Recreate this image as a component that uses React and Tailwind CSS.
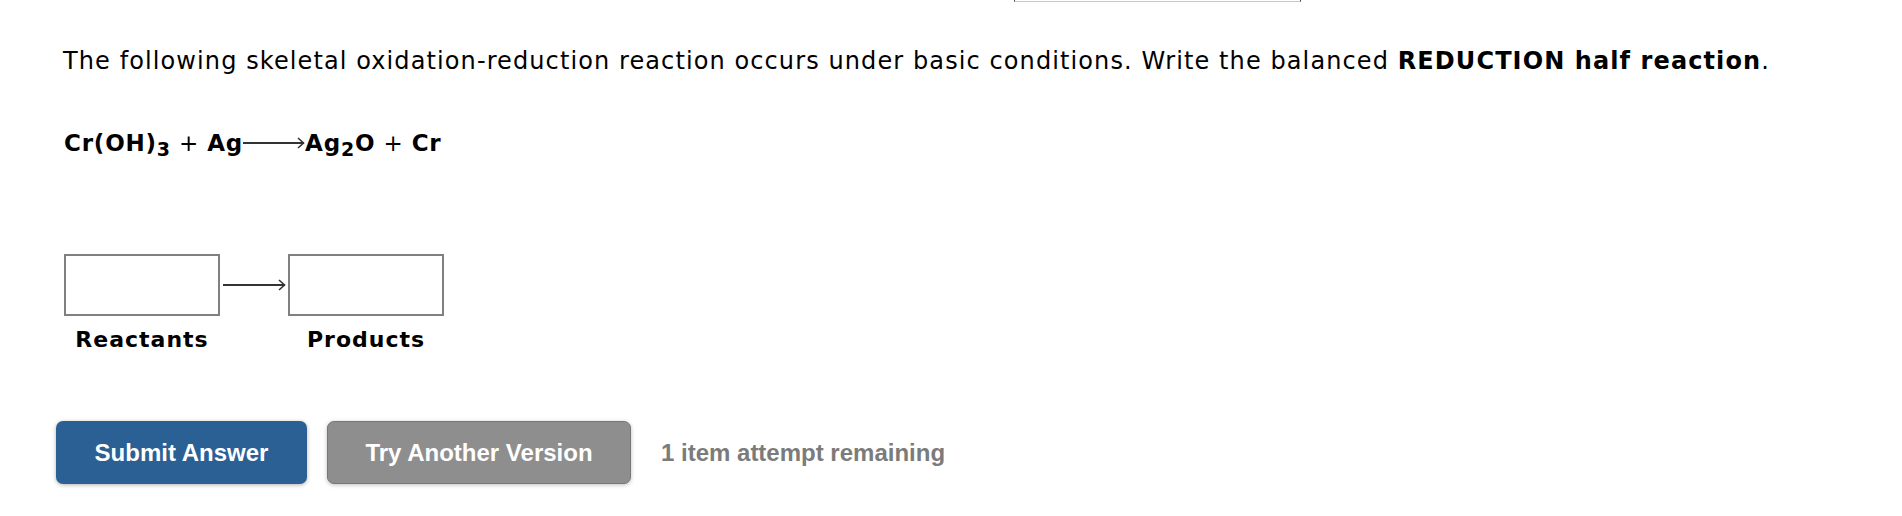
import React from "react";

const Arrow = ({ width }) => (
  <svg width={width} height="14" viewBox={`0 0 ${width} 14`} className="block">
    <line x1="0" y1="7" x2={width - 1} y2="7" stroke="#333" strokeWidth="2" />
    <polyline points={`${width - 7},2 ${width - 1.5},7 ${width - 7},12`} fill="none" stroke="#333" strokeWidth="1.6" />
  </svg>
);

const Sub = ({ children }) => (
  <span className="relative top-[6px] text-[19px] leading-none">{children}</span>
);

const App = () => {
  return (
    <div className="w-[1902px] h-[516px] bg-white overflow-hidden font-['DejaVu_Sans',Verdana,sans-serif] text-black">
      <div className="ml-[1014px] w-[287px] h-[2px] border-x border-b border-x-[#444] border-b-[#c8c8c8]" />

      <div className="pl-[56px]">
        <p className="ml-[7px] mt-[41px] text-[24px] leading-[36px] tracking-[1.1px]">
          The following skeletal oxidation-reduction reaction occurs under basic conditions. Write the balanced{" "}
          <b>REDUCTION half reaction</b>.
        </p>

        <div className="ml-[8px] mt-[48px] flex items-center text-[23px] tracking-[0.8px] font-bold h-[32px]">
          <span>Cr(OH)</span>
          <Sub>3</Sub>
          <span className="font-normal">&nbsp;+&nbsp;</span>
          <span>Ag</span>
          <Arrow width={62} />
          <span>Ag</span>
          <Sub>2</Sub>
          <span>O</span>
          <span className="font-normal">&nbsp;+&nbsp;</span>
          <span>Cr</span>
        </div>

        <div className="ml-[8px] mt-[95px] flex items-start">
          <div className="flex flex-col items-center">
            <div className="w-[156px] h-[62px] border-2 border-[#808080] bg-white" />
            <div className="mt-[7px] text-[22px] tracking-[1px] font-bold">Reactants</div>
          </div>
          <div className="ml-[3px] h-[62px] flex items-center">
            <Arrow width={63} />
          </div>
          <div className="ml-[2px] flex flex-col items-center">
            <div className="w-[156px] h-[62px] border-2 border-[#808080] bg-white" />
            <div className="mt-[7px] text-[22px] tracking-[1px] font-bold">Products</div>
          </div>
        </div>

        <div className="mt-[65px] flex items-center font-['Liberation_Sans',Arial,sans-serif] font-bold text-[24px]">
          <button className="w-[251px] h-[63px] rounded-[7px] bg-[#2a6093] text-white shadow-[0_1px_4px_rgba(0,0,0,0.3)]">
            Submit Answer
          </button>
          <button className="ml-[20px] w-[304px] h-[63px] rounded-[7px] bg-[#8e8e8e] border border-[#777] text-white shadow-[0_1px_4px_rgba(0,0,0,0.25)]">
            Try Another Version
          </button>
          <span className="ml-[30px] text-[#7b7b7b]">1 item attempt remaining</span>
        </div>
      </div>
    </div>
  );
};

export default App;
